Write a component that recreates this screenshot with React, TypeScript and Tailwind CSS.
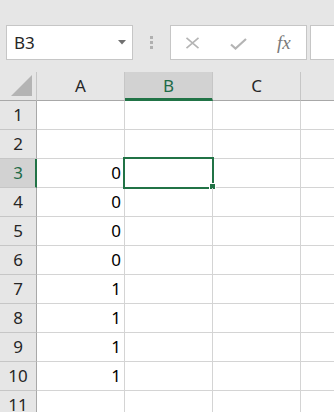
import React from "react";

const rows = [
  { n: 1, a: "" },
  { n: 2, a: "" },
  { n: 3, a: "0" },
  { n: 4, a: "0" },
  { n: 5, a: "0" },
  { n: 6, a: "0" },
  { n: 7, a: "1" },
  { n: 8, a: "1" },
  { n: 9, a: "1" },
  { n: 10, a: "1" },
  { n: 11, a: "" },
];

export default function App() {
  return (
    <div className="h-[412px] w-[334px] overflow-hidden bg-white font-['Noto_Sans',sans-serif] text-[17px]">
      {/* formula bar */}
      <div className="flex h-[72px] items-start bg-[#e6e6e6] pt-[25px] pl-[6px]">
        <div className="flex h-[35px] w-[127px] shrink-0 items-center justify-between border border-[#c6c6c6] bg-white pr-[6px] pl-[7px]">
          <span className="text-[#262626]">B3</span>
          <svg width="8" height="5" viewBox="0 0 8 5">
            <path d="M0 0H8L4 4.5Z" fill="#707070" />
          </svg>
        </div>
        <div className="mt-[11px] ml-[17px] flex w-[3px] shrink-0 flex-col gap-[2px]">
          <div className="h-[3px] w-[3px] bg-[#b0b0b0]" />
          <div className="h-[3px] w-[3px] bg-[#b0b0b0]" />
          <div className="h-[3px] w-[3px] bg-[#b0b0b0]" />
        </div>
        <div className="ml-[17px] flex h-[35px] w-[137px] shrink-0 items-center border border-[#c6c6c6] bg-white pl-[14px]">
          <svg width="15" height="12" viewBox="0 0 15 12">
            <path d="M1.5 0.8L13.5 11.2M13.5 0.8L1.5 11.2" stroke="#b4b4b4" strokeWidth="1.6" fill="none" />
          </svg>
          <svg className="mt-[2px] ml-[30px]" width="17" height="12" viewBox="0 0 17 12">
            <path d="M1 6.5L5.5 10.5L16 1" stroke="#b4b4b4" strokeWidth="2.2" fill="none" />
          </svg>
          <span className="ml-[30px] font-['Liberation_Serif',serif] text-[19px] leading-none text-[#7a7a7a] italic">
            fx
          </span>
        </div>
        <div className="ml-[3px] h-[35px] flex-1 border border-r-0 border-[#c6c6c6] bg-white" />
      </div>

      {/* grid */}
      <div className="grid grid-cols-[37px_88px_88px_88px_1fr] text-[#262626]">
        <div className="flex h-[29px] items-end justify-end border-r border-b border-r-[#c6c6c6] border-b-[#a8a8a8] bg-[#e6e6e6] pr-[3px] pb-[3px]">
          <svg width="22" height="22" viewBox="0 0 22 22">
            <path d="M21 0V21H0Z" fill="#b4b4b4" />
          </svg>
        </div>
        <div className="flex h-[29px] items-center justify-center border-r border-b border-r-[#c6c6c6] border-b-[#a8a8a8] bg-[#e6e6e6]">
          A
        </div>
        <div className="flex h-[29px] items-center justify-center border-r border-b-[3px] border-r-[#c6c6c6] border-b-[#217346] bg-[#d2d2d2] pt-[2px] text-[#1e6b48]">
          B
        </div>
        <div className="flex h-[29px] items-center justify-center border-r border-b border-r-[#c6c6c6] border-b-[#a8a8a8] bg-[#e6e6e6]">
          C
        </div>
        <div className="h-[29px] border-b border-b-[#a8a8a8] bg-[#e6e6e6]" />

        {rows.map((r) => {
          const sel = r.n === 3;
          return (
            <React.Fragment key={r.n}>
              <div
                className={
                  sel
                    ? "flex h-[29px] items-center justify-center border-r-2 border-b border-r-[#217346] border-b-[#c6c6c6] bg-[#d2d2d2] pl-[1px] text-[#1e6b48]"
                    : "flex h-[29px] items-center justify-center border-r border-b border-r-[#a8a8a8] border-b-[#c6c6c6] bg-[#e6e6e6]"
                }
              >
                {r.n}
              </div>
              <div className="flex h-[29px] items-center justify-end border-r border-b border-[#d4d4d4] pr-[3px] text-black">
                {r.a}
              </div>
              <div className="relative h-[29px] border-r border-b border-[#d4d4d4]">
                {sel && (
                  <>
                    <div className="absolute -top-[2px] -left-[2px] h-[32px] w-[91px] border-2 border-[#217346]" />
                    <div className="absolute top-[24px] left-[84px] h-[7px] w-[7px] border border-white bg-[#217346]" />
                  </>
                )}
              </div>
              <div className="h-[29px] border-r border-b border-[#d4d4d4]" />
              <div className="h-[29px] border-b border-[#d4d4d4]" />
            </React.Fragment>
          );
        })}
      </div>
    </div>
  );
}
